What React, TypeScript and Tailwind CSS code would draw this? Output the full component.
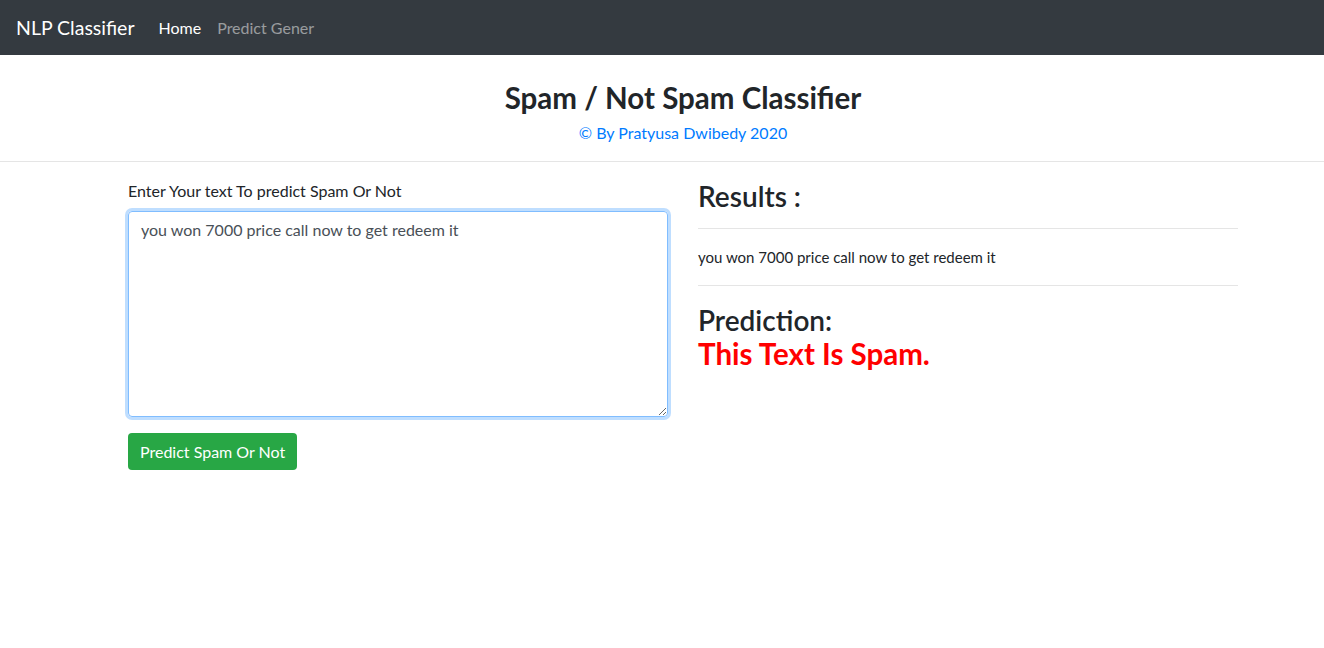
export default function App() {
  const text = "you won 7000 price call now to get redeem it";

  return (
    <div
      className="min-h-[648px] bg-white text-[#212529]"
      style={{ fontFamily: 'Lato, "Open Sans", sans-serif' }}
    >
      {/* Navbar */}
      <nav className="h-[55px] bg-[#343a40] flex items-center px-4">
        <span className="text-[19.5px] text-white mr-6">NLP Classifier</span>
        <span className="text-[16px] text-white mr-4">Home</span>
        <span className="text-[16px] text-white/50">Predict Gener</span>
      </nav>

      {/* Header */}
      <div className="pl-[128px] pt-[26px] pb-[16px] border-b border-[#e5e5e5]">
        <div className="w-[1110px] flex flex-col items-center">
          <h2 className="text-[29.5px] font-bold leading-[34px]">
            Spam / Not Spam Classifier
          </h2>
          <p className="text-[16px] text-[#007bff] mt-[6px]">
            © By Pratyusa Dwibedy 2020
          </p>
        </div>
      </div>

      {/* Body */}
      <div className="flex gap-[30px] pl-[128px] pt-[17px]">
        <div className="w-[540px] flex flex-col">
          <label className="text-[16px] leading-[24px] mb-2">
            Enter Your text To predict Spam Or Not
          </label>
          <textarea
            defaultValue={text}
            className="h-[206px] w-full rounded border border-[#80bdff] shadow-[0_0_0_3px_rgba(0,123,255,0.25)] px-3 py-[6px] text-[16px] text-[#495057] outline-none"
          />
          <button className="mt-4 self-start bg-[#28a745] text-white text-[16px] rounded px-3 h-[37px]">
            Predict Spam Or Not
          </button>
        </div>

        <div className="w-[540px] flex flex-col">
          <h3 className="text-[28px] font-semibold leading-[34px]">
            Results :
          </h3>
          <hr className="border-[#e5e5e5] mt-[15px]" />
          <p className="text-[15px] mt-[17px] leading-[22px]">{text}</p>
          <hr className="border-[#e5e5e5] mt-[17px]" />
          <h3 className="text-[28px] font-semibold leading-[34px] mt-[17px]">
            Prediction:
          </h3>
          <h3 className="text-[29.5px] font-bold leading-[34px] text-[#ff0000]">
            This Text Is Spam.
          </h3>
        </div>
      </div>
    </div>
  );
}
